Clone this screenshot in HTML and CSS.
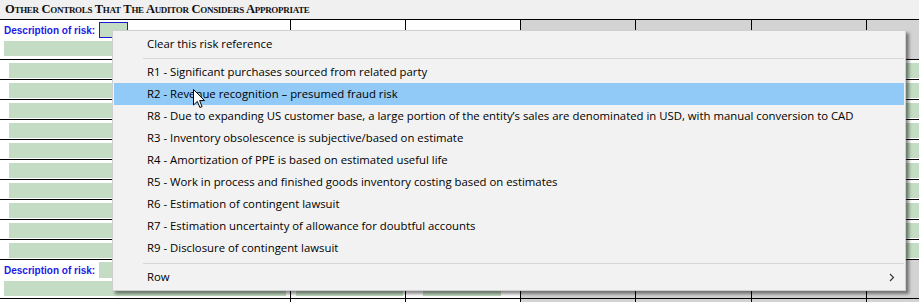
FILE: index.html
```html
<!DOCTYPE html>
<html>
<head>
    <title>Other Controls</title>
    <link rel="stylesheet" href="styles.css">
</head>
<body>
    <div class="title">Other Controls That The Auditor Considers Appropriate</div>

    <div class="sheet">
        <!-- section: first risk -->
        <div class="row sec">
            <div class="c ca">
                <div class="lbl-line">
                    <span class="lbl">Description of risk:</span>
                    <span class="ref selected"></span>
                </div>
                <div class="bar bar-a"></div>
            </div>
            <div class="c cb"><div class="bar bar-b"></div></div>
            <div class="c cc"><div class="bar bar-c"></div></div>
            <div class="c cd grey"></div>
            <div class="c ce grey"></div>
            <div class="c cf grey"></div>
            <div class="c cg grey"></div>
        </div>

        <div class="row line"><div class="c ca"><div class="fld"></div></div><div class="c cb"></div><div class="c cc"></div><div class="c cd"></div><div class="c ce"></div><div class="c cf"></div><div class="c cg"><div class="fld fld-g"></div></div></div>
        <div class="row line"><div class="c ca"><div class="fld"></div></div><div class="c cb"></div><div class="c cc"></div><div class="c cd"></div><div class="c ce"></div><div class="c cf"></div><div class="c cg"><div class="fld fld-g"></div></div></div>
        <div class="row line"><div class="c ca"><div class="fld"></div></div><div class="c cb"></div><div class="c cc"></div><div class="c cd"></div><div class="c ce"></div><div class="c cf"></div><div class="c cg"><div class="fld fld-g"></div></div></div>
        <div class="row line"><div class="c ca"><div class="fld"></div></div><div class="c cb"></div><div class="c cc"></div><div class="c cd"></div><div class="c ce"></div><div class="c cf"></div><div class="c cg"><div class="fld fld-g"></div></div></div>
        <div class="row line"><div class="c ca"><div class="fld"></div></div><div class="c cb"></div><div class="c cc"></div><div class="c cd"></div><div class="c ce"></div><div class="c cf"></div><div class="c cg"><div class="fld fld-g"></div></div></div>
        <div class="row line"><div class="c ca"><div class="fld"></div></div><div class="c cb"></div><div class="c cc"></div><div class="c cd"></div><div class="c ce"></div><div class="c cf"></div><div class="c cg"><div class="fld fld-g"></div></div></div>
        <div class="row line"><div class="c ca"><div class="fld"></div></div><div class="c cb"></div><div class="c cc"></div><div class="c cd"></div><div class="c ce"></div><div class="c cf"></div><div class="c cg"><div class="fld fld-g"></div></div></div>
        <div class="row line"><div class="c ca"><div class="fld"></div></div><div class="c cb"></div><div class="c cc"></div><div class="c cd"></div><div class="c ce"></div><div class="c cf"></div><div class="c cg"><div class="fld fld-g"></div></div></div>
        <div class="row line"><div class="c ca"><div class="fld"></div></div><div class="c cb"></div><div class="c cc"></div><div class="c cd"></div><div class="c ce"></div><div class="c cf"></div><div class="c cg"><div class="fld fld-g"></div></div></div>
        <div class="row line"><div class="c ca"><div class="fld"></div></div><div class="c cb"></div><div class="c cc"></div><div class="c cd"></div><div class="c ce"></div><div class="c cf"></div><div class="c cg"><div class="fld fld-g"></div></div></div>

        <!-- section: next risk -->
        <div class="row sec sec-last">
            <div class="c ca">
                <div class="lbl-line">
                    <span class="lbl">Description of risk:</span>
                    <span class="ref"></span>
                </div>
                <div class="bar bar-a"></div>
            </div>
            <div class="c cb"><div class="bar bar-b"></div></div>
            <div class="c cc"><div class="bar bar-c"></div></div>
            <div class="c cd grey"></div>
            <div class="c ce grey"></div>
            <div class="c cf grey"></div>
            <div class="c cg grey"></div>
        </div>

        <div class="row tail">
            <div class="c ca"></div>
            <div class="c cb"></div>
            <div class="c cc"></div>
            <div class="c cd grey"></div>
            <div class="c ce grey"></div>
            <div class="c cf grey"></div>
            <div class="c cg grey"></div>
        </div>
    </div>

    <!-- context menu -->
    <div class="menu">
        <div class="item">Clear this risk reference</div>
        <div class="sep"></div>
        <div class="item">R1 - Significant purchases sourced from related party</div>
        <div class="item hover">R2 - Revenue recognition – presumed fraud risk</div>
        <div class="item">R8 - Due to expanding US customer base, a large portion of the entity’s sales are denominated in USD, with manual conversion to CAD</div>
        <div class="item">R3 - Inventory obsolescence is subjective/based on estimate</div>
        <div class="item">R4 - Amortization of PPE is based on estimated useful life</div>
        <div class="item">R5 - Work in process and finished goods inventory costing based on estimates</div>
        <div class="item">R6 - Estimation of contingent lawsuit</div>
        <div class="item">R7 - Estimation uncertainty of allowance for doubtful accounts</div>
        <div class="item">R9 - Disclosure of contingent lawsuit</div>
        <div class="sep sep-low"></div>
        <div class="item sub">
            <span>Row</span>
            <svg class="chev" width="6" height="9" viewBox="0 0 6 9">
                <polyline points="1,1 4.5,4.5 1,8" fill="none" stroke="#333" stroke-width="1.1"/>
            </svg>
        </div>
    </div>

    <svg class="cursor" width="13" height="20" viewBox="0 0 13 20">
        <path d="M0.5,0.5 L0.5,16 L4.3,12.4 L6.9,18.5 L9.1,17.6 L6.6,11.6 L11.5,11.6 Z" fill="#fff" stroke="#000" stroke-width="1" stroke-linejoin="miter"/>
    </svg>
</body>
</html>
```

FILE: styles.css
```css
body {
    margin: 0;
    width: 919px;
    height: 302px;
    overflow: hidden;
    position: relative;
    background-color: #f0f0f0;
    font-family: "Open Sans", sans-serif;
}

.title {
    height: 19px;
    padding-left: 5px;
    font-family: "Liberation Serif", serif;
    font-weight: bold;
    font-variant: small-caps;
    font-size: 12.5px;
    letter-spacing: -0.3px;
    line-height: 18px;
    color: #101010;
}

.sheet {
    border-top: 1px solid #000;
}

.row {
    display: flex;
    box-sizing: border-box;
    border-bottom: 1px solid #000;
}

.c {
    box-sizing: border-box;
    border-right: 1px solid #000;
    background: #ffffff;
}

.ca { width: 291px; }
.cb { width: 115px; }
.cc { width: 115px; }
.cd { width: 115px; }
.ce { width: 116px; }
.cf { width: 115px; }
.cg { width: 52px; border-right: none; }

.grey {
    background: #d3d3d3;
}

.sec { height: 40px; }
.sec-last { height: 39px; }
.line { height: 20px; }
.tail { height: 3px; border-bottom: none; }

.lbl-line {
    display: flex;
    align-items: center;
    height: 20px;
    padding-left: 4px;
}

.lbl {
    font-family: "Liberation Sans", sans-serif;
    font-weight: bold;
    font-size: 10px;
    color: #1a1ae6;
    margin-right: 4px;
}

.ref {
    box-sizing: border-box;
    width: 29px;
    height: 16px;
    background: #c3dcc3;
}

.ref.selected {
    border: 1px solid #1a1ad0;
}

.bar {
    height: 15px;
    margin-top: 1px;
    background: #c3dcc3;
}

.bar-a { margin-left: 4px; margin-right: 4px; }
.bar-b { margin-left: 5px; margin-right: 2px; margin-top: 21px; }
.bar-c { margin-left: 17px; width: 78px; margin-top: 21px; }

.fld {
    height: 15px;
    margin: 3px 4px 0 9px;
    background: #c3dcc3;
}

.fld-g {
    margin-left: 3px;
    margin-right: 0;
}

/* context menu */
.menu {
    position: absolute;
    left: 112px;
    top: 30px;
    width: 794px;
    box-sizing: border-box;
    padding: 2px 1px;
    background: #f2f2f2;
    border: 1px solid #cfcfcf;
    box-shadow: 3px 3px 3px rgba(0, 0, 0, 0.45);
    font-size: 11.35px;
    color: #000;
}

.item {
    height: 22px;
    line-height: 22px;
    padding-left: 33px;
    white-space: nowrap;
}

.item.hover {
    background: #91c9f7;
}

.sub {
    display: flex;
    align-items: center;
    justify-content: space-between;
    padding-right: 9px;
}

.chev {
    display: block;
}

.sep {
    height: 1px;
    margin: 3px 0 2px 29px;
    background: #d7d7d7;
}

.sep-low {
    margin-top: 4px;
}

.cursor {
    position: absolute;
    left: 193px;
    top: 89px;
}
```
